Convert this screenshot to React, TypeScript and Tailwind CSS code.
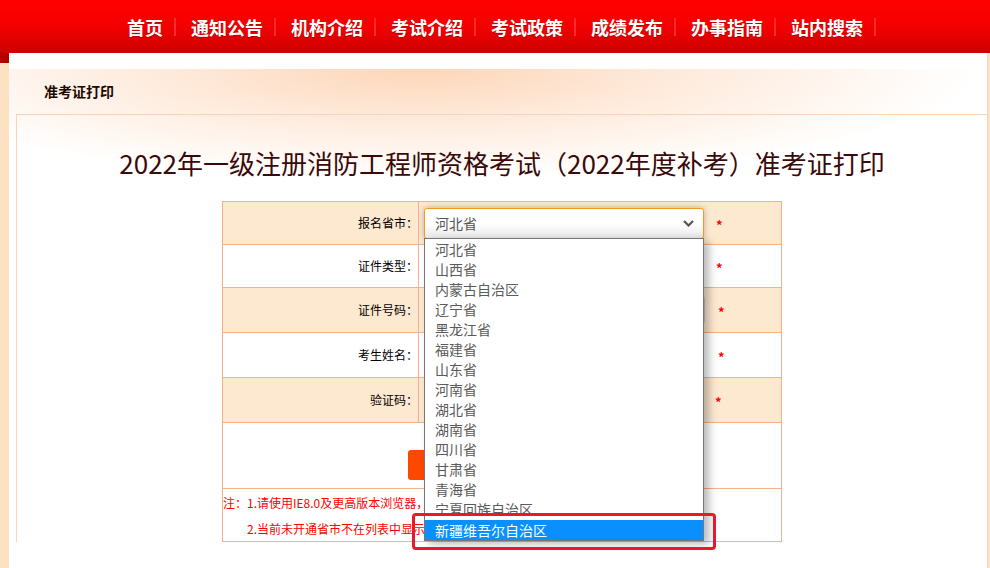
import React from "react";

const navs = ["首页", "通知公告", "机构介绍", "考试介绍", "考试政策", "成绩发布", "办事指南", "站内搜索"];
const provinces = [
  "河北省", "山西省", "内蒙古自治区", "辽宁省", "黑龙江省", "福建省", "山东省",
  "河南省", "湖北省", "湖南省", "四川省", "甘肃省", "青海省",
];

const BORDER = "border-[#f7b08a]";

function Star() {
  return <span className="text-[13px] leading-none text-[#ff0000] font-bold">*</span>;
}

function Row({
  label,
  peach,
  h,
  children,
}: {
  label: string;
  peach: boolean;
  h: string;
  children?: React.ReactNode;
}) {
  return (
    <div className={`flex ${h} border-b ${BORDER} ${peach ? "bg-[#fde8d0]" : "bg-white"}`}>
      <div className={`w-[196px] shrink-0 border-r ${BORDER} flex items-center justify-end text-[12px] text-black`}>
        {label}
      </div>
      <div className="flex items-center pl-[5px]">{children}</div>
    </div>
  );
}

export default function App() {
  return (
    <div className="w-[990px] h-[568px] overflow-hidden bg-[#fde1c3] font-['Noto_Sans_CJK_SC',sans-serif] relative">
      {/* header */}
      <div className="h-[53px] bg-gradient-to-b from-[#ff0000] via-[#f40000] to-[#cc0000] flex items-center pl-[127px]">
        {navs.map((n) => (
          <div key={n} className="flex items-center">
            <span className="text-white text-[18px] font-bold leading-none [text-shadow:0_1px_1px_rgba(120,0,0,0.5)]">
              {n}
            </span>
            <span className="ml-[11px] mr-[15px] w-[2px] h-[18px] bg-[#ff2a2a]" />
          </div>
        ))}
      </div>

      <div className="flex">
        {/* left strip */}
        <div className="w-[9px] shrink-0 flex flex-col">
          <div className="h-[10px] bg-[#b00000]" />
          <div className="flex-1 bg-[#fde1c3]" />
        </div>

        {/* main */}
        <div className="w-[979px] bg-white border-r border-[#f3d6c2] h-[515px]">
          <div className="h-[16px] bg-white" />
          <div className="bg-[radial-gradient(ellipse_560px_110px_at_42%_0%,#fdd6b8_0%,#feeadb_45%,#ffffff_100%)]">
            <div className="h-[45px] flex items-center pl-[35px] text-[14px] font-bold text-[#1c0a00]">
              准考证打印
            </div>
            <div className="ml-[7px] border-t border-l border-[#fbd3b5] pt-[30px]">
              <h1 className="text-center text-[26px] leading-[36px] text-[#3a0a0a] font-normal">
                2022年一级注册消防工程师资格考试（2022年度补考）准考证打印
              </h1>

              {/* form table */}
              <div className={`relative mx-auto mt-[20px] w-[560px] border ${BORDER}`}>
                <Row label="报名省市：" peach h="h-[43px]">
                  <div className="w-[280px] h-[31px] rounded-[3px] border border-[#f39a1e] bg-gradient-to-b from-white via-white to-[#e9e9e9] shadow-[0_0_6px_rgba(0,0,0,0.25)] flex items-center justify-between pl-[10px] pr-[9px]">
                    <span className="text-[14px] text-[#555]">河北省</span>
                    <svg width="11" height="7" viewBox="0 0 11 7">
                      <path d="M1 1l4.5 4.5L10 1" fill="none" stroke="#555" strokeWidth="2.2" />
                    </svg>
                  </div>
                  <span className="ml-[12px]">
                    <Star />
                  </span>
                </Row>
                <Row label="证件类型：" peach={false} h="h-[43px]">
                  <div className="w-[280px] h-[31px]" />
                  <span className="ml-[12px]">
                    <Star />
                  </span>
                </Row>
                <Row label="证件号码：" peach h="h-[45px]">
                  <div className="w-[281px] h-[30px] rounded-[4px] border border-[#c8c8c8] bg-white shadow-[inset_0_1px_2px_rgba(0,0,0,0.08)]" />
                  <span className="ml-[13px]">
                    <Star />
                  </span>
                </Row>
                <Row label="考生姓名：" peach={false} h="h-[45px]">
                  <div className="w-[280px] h-[30px] rounded-[4px] border border-[#c8c8c8] bg-white" />
                  <span className="ml-[14px]">
                    <Star />
                  </span>
                </Row>
                <Row label="验证码：" peach h="h-[45px]">
                  <div className="w-[280px] h-[30px]" />
                  <span className="ml-[11px]">
                    <Star />
                  </span>
                </Row>
                <div className={`h-[66px] border-b ${BORDER} flex justify-center pt-[27px]`}>
                  <div className="w-[188px] h-[30px] rounded-[3px] bg-[#fd4800]" />
                </div>
                <div className="h-[52px] pt-[1px] text-[12px] leading-[26px] text-[#ff0000]">
                  <div>注：1.请使用IE8.0及更高版本浏览器，</div>
                  <div className="pl-[24px]">2.当前未开通省市不在列表中显示。</div>
                </div>

                {/* dropdown list */}
                <div className="absolute left-[201px] top-[36px] w-[280px] h-[303px] border border-[#767676] bg-white shadow-[5px_3px_8px_rgba(0,0,0,0.28)] text-[14px] text-[#5a5a5a]">
                  {provinces.map((p) => (
                    <div key={p} className="h-[20px] leading-[20px] pl-[10px]">
                      {p}
                    </div>
                  ))}
                  <div className="h-[17px] leading-[20px] pl-[10px] overflow-hidden">宁夏回族自治区</div>
                  <div className="h-[4px]" />
                  <div className="h-[20px] leading-[20px] pl-[10px] bg-[#0a8fff] text-white">新疆维吾尔自治区</div>
                </div>

                {/* annotation */}
                <div className="absolute left-[189px] top-[311px] w-[304px] h-[37px] border-[3px] border-[#e51c27] rounded-[4px]" />
              </div>
            </div>
          </div>
        </div>
      </div>
    </div>
  );
}
